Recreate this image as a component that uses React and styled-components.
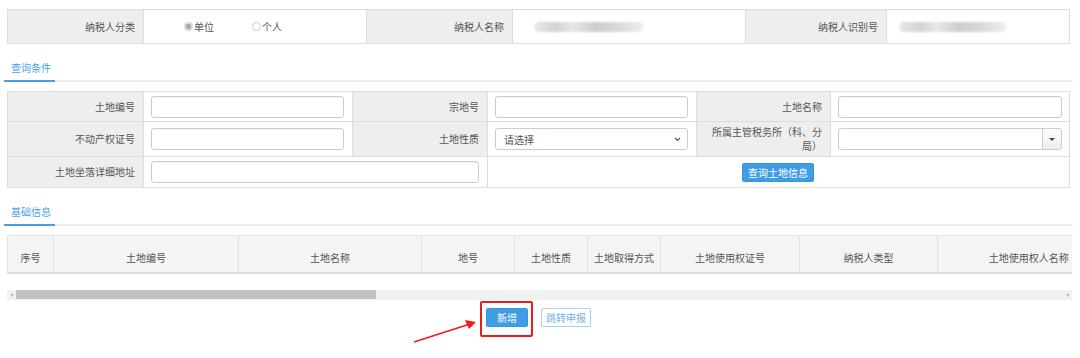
import React from "react";
import styled, { createGlobalStyle } from "styled-components";

const Global = createGlobalStyle`
  html, body { margin: 0; padding: 0; background: #fff; }
  body { font-family: "Microsoft YaHei", "Noto Sans CJK SC", "Liberation Sans", sans-serif; font-size: 10px; color: #444; }
  * { box-sizing: border-box; }
`;

const Page = styled.div`
  width: 1080px;
  height: 358px;
  padding: 9px 8px 0 7px;
  overflow: hidden;
  position: relative;
`;

const Table = styled.table`
  width: 1062px;
  border-collapse: collapse;
  table-layout: fixed;
  margin-top: ${(p) => p.$mt || 0}px;
`;

const Tr = styled.tr`
  height: ${(p) => p.$h}px;
`;

const Label = styled.td`
  background: #eeeeee;
  border: 1px solid #dddddd;
  text-align: right;
  padding: 0 8px 0 12px;
  color: #555;
  font-size: 10px;
  line-height: 14px;
  vertical-align: middle;
`;

const Value = styled.td`
  background: #fff;
  border: 1px solid #dddddd;
  padding: 0 ${(p) => p.$pr ?? 8}px 0 7px;
  vertical-align: middle;
  text-align: ${(p) => p.$align || "left"};
`;

const RadioGroup = styled.div`
  display: flex;
  align-items: center;
  padding-left: 33px;
  gap: 38px;
`;

const RadioItem = styled.label`
  display: flex;
  align-items: center;
  color: #555;
  font-size: 10px;
`;

const RadioDot = styled.span`
  width: 9px;
  height: 9px;
  border-radius: 50%;
  border: 1px solid #cfcfcf;
  background: ${(p) => (p.$on ? "radial-gradient(circle, #aaa 0 2.5px, #e6e6e6 3px)" : "#fff")};
  margin-right: 1px;
  display: inline-block;
`;

const Blur = styled.div`
  height: 10px;
  width: ${(p) => p.$w}px;
  border-radius: 5px;
  background: linear-gradient(90deg, #e6e8ee 0%, #d2d2d4 20%, #e8e8e8 35%, #cdcdcf 55%, #d8d8d8 75%, #f0f0f3 100%);
  filter: blur(1.2px);
  margin-left: ${(p) => p.$ml || 0}px;
`;

const TabBar = styled.div`
  margin: ${(p) => p.$mt}px 0 0 -3px;
  width: 1069px;
  border-bottom: 2px solid #eeeeee;
  display: flex;
`;

const Tab = styled.div`
  height: 26px;
  line-height: 23px;
  padding: 0 7px;
  width: 51px;
  color: #4aa2e6;
  font-size: 10px;
  border-bottom: 2px solid #4a9fe2;
  margin-bottom: -2px;
  white-space: nowrap;
`;

const Input = styled.div`
  height: 22px;
  width: 100%;
  border: 1px solid #cccccc;
  border-radius: 3px;
  background: #fff;
  box-shadow: inset 0 1px 1px rgba(0, 0, 0, 0.04);
`;

const Select = styled.div`
  height: 22px;
  width: 100%;
  border: 1px solid #cccccc;
  border-radius: 3px;
  background: #fff;
  display: flex;
  align-items: center;
  justify-content: space-between;
  padding: 0 6px 0 8px;
  color: #555;
  font-size: 10px;
`;

const Combo = styled.div`
  height: 22px;
  width: 100%;
  border: 1px solid #cccccc;
  border-radius: 3px;
  background: #fff;
  display: flex;
  justify-content: flex-end;
  overflow: hidden;
`;

const ComboBtn = styled.div`
  width: 19px;
  height: 100%;
  border-left: 1px solid #cccccc;
  background: linear-gradient(#fff, #ececec);
  display: flex;
  align-items: center;
  justify-content: center;
`;

const Caret = styled.span`
  width: 0;
  height: 0;
  border-left: 3px solid transparent;
  border-right: 3px solid transparent;
  border-top: 3px solid #444;
`;

const BlueButton = styled.button`
  font-family: inherit;
  font-size: 10px;
  color: #fff;
  background: #3f9de3;
  border: 1px solid #3a95da;
  border-radius: 2px;
  height: 19px;
  padding: 0 ${(p) => p.$px || 8}px;
  line-height: 17px;
  cursor: pointer;
  position: relative;
`;

const GhostButton = styled.button`
  font-family: inherit;
  font-size: 10px;
  color: #6fb3ea;
  background: #fff;
  border: 1px solid #a7d1f4;
  border-radius: 2px;
  height: 19px;
  padding: 0 4px;
  line-height: 17px;
`;

const Highlight = styled.span`
  position: relative;
  display: inline-flex;
  &::after {
    content: "";
    position: absolute;
    top: -7px;
    bottom: -10px;
    left: -6px;
    right: -5px;
    border: 2px solid #ec1c1c;
    border-radius: 2px;
    pointer-events: none;
  }
`;

const GridWrap = styled.div`
  width: 1065px;
  overflow: hidden;
  margin-top: 9px;
`;

const GridTable = styled.table`
  border-collapse: collapse;
  table-layout: fixed;
  width: 1112px;
`;

const Th = styled.th`
  height: 37px;
  background: #f4f4f4;
  border-left: 1px solid #e2e2e2;
  border-top: 1px solid #e8e8e8;
  border-bottom: 2px solid #dddddd;
  font-weight: normal;
  color: #555;
  font-size: 10px;
  vertical-align: bottom;
  padding: 0 0 7px;
  white-space: nowrap;
`;

const ScrollBar = styled.div`
  margin-top: 16px;
  width: 1065px;
  height: 10px;
  background: #f1f1f1;
  display: flex;
  align-items: center;
`;

const ScrollArrow = styled.span`
  width: 9px;
  display: flex;
  justify-content: center;
  &::before {
    content: "";
    border-top: 2px solid transparent;
    border-bottom: 2px solid transparent;
    ${(p) => (p.$dir === "left" ? "border-right: 2px solid #a3a3a3;" : "border-left: 2px solid #a3a3a3;")}
  }
`;

const Thumb = styled.div`
  width: 360px;
  height: 9px;
  background: #c1c1c1;
`;

const Spacer = styled.div`
  flex: 1;
`;

const Actions = styled.div`
  display: flex;
  justify-content: center;
  gap: 13px;
  margin-top: 8px;
  padding-right: 2px;
`;

const ArrowSvg = styled.svg`
  position: absolute;
  left: 410px;
  top: 316px;
  pointer-events: none;
`;

const cols = [136, 223, 146, 233, 141, 183];
const qcols = [136, 209, 135, 209, 134, 239];
const gcols = [
  ["序号", 46],
  ["土地编号", 185],
  ["土地名称", 183],
  ["地号", 93],
  ["土地性质", 73],
  ["土地取得方式", 73],
  ["土地使用权证号", 139],
  ["纳税人类型", 138],
  ["土地使用权人名称", 182],
];

function Chevron() {
  return (
    <svg width="7" height="5" viewBox="0 0 7 5">
      <path d="M1 1 L3.5 3.5 L6 1" fill="none" stroke="#555" strokeWidth="1.2" />
    </svg>
  );
}

export default function App() {
  return (
    <Page>
      <Global />
      <Table>
        <colgroup>
          {cols.map((w, i) => (
            <col key={i} style={{ width: w }} />
          ))}
        </colgroup>
        <tbody>
          <Tr $h={34}>
            <Label>纳税人分类</Label>
            <Value>
              <RadioGroup>
                <RadioItem>
                  <RadioDot $on />
                  单位
                </RadioItem>
                <RadioItem>
                  <RadioDot />
                  个人
                </RadioItem>
              </RadioGroup>
            </Value>
            <Label>纳税人名称</Label>
            <Value>
              <Blur $w={110} $ml={14} />
            </Value>
            <Label>纳税人识别号</Label>
            <Value>
              <Blur $w={108} $ml={5} />
            </Value>
          </Tr>
        </tbody>
      </Table>

      <TabBar $mt={12}>
        <Tab>查询条件</Tab>
      </TabBar>

      <Table $mt={9}>
        <colgroup>
          {qcols.map((w, i) => (
            <col key={i} style={{ width: w }} />
          ))}
        </colgroup>
        <tbody>
          <Tr $h={30}>
            <Label>土地编号</Label>
            <Value>
              <Input />
            </Value>
            <Label>宗地号</Label>
            <Value>
              <Input />
            </Value>
            <Label>土地名称</Label>
            <Value $pr={7}>
              <Input />
            </Value>
          </Tr>
          <Tr $h={35}>
            <Label>不动产权证号</Label>
            <Value>
              <Input />
            </Value>
            <Label>土地性质</Label>
            <Value>
              <Select>
                请选择
                <Chevron />
              </Select>
            </Value>
            <Label>所属主管税务所（科、分局）</Label>
            <Value $pr={7}>
              <Combo>
                <ComboBtn>
                  <Caret />
                </ComboBtn>
              </Combo>
            </Value>
          </Tr>
          <Tr $h={31}>
            <Label>土地坐落详细地址</Label>
            <Value colSpan={2}>
              <Input />
            </Value>
            <Value colSpan={3} $align="center">
              <BlueButton $px={5}>查询土地信息</BlueButton>
            </Value>
          </Tr>
        </tbody>
      </Table>

      <TabBar $mt={12}>
        <Tab>基础信息</Tab>
      </TabBar>

      <GridWrap>
        <GridTable>
          <colgroup>
            {gcols.map(([, w], i) => (
              <col key={i} style={{ width: w }} />
            ))}
          </colgroup>
          <thead>
            <tr>
              {gcols.map(([t], i) => (
                <Th key={i}>{t}</Th>
              ))}
            </tr>
          </thead>
        </GridTable>
      </GridWrap>

      <ScrollBar>
        <ScrollArrow $dir="left" />
        <Thumb />
        <Spacer />
        <ScrollArrow $dir="right" />
      </ScrollBar>

      <Actions>
        <Highlight>
          <BlueButton $px={10}>新增</BlueButton>
        </Highlight>
        <GhostButton>跳转申报</GhostButton>
      </Actions>

      <ArrowSvg width="72" height="30" viewBox="0 0 72 30">
        <line x1="4" y1="26" x2="60" y2="8" stroke="#ec1c1c" strokeWidth="1.6" />
        <path d="M66 6 L55 4 L59 13 Z" fill="#ec1c1c" />
      </ArrowSvg>
    </Page>
  );
}
